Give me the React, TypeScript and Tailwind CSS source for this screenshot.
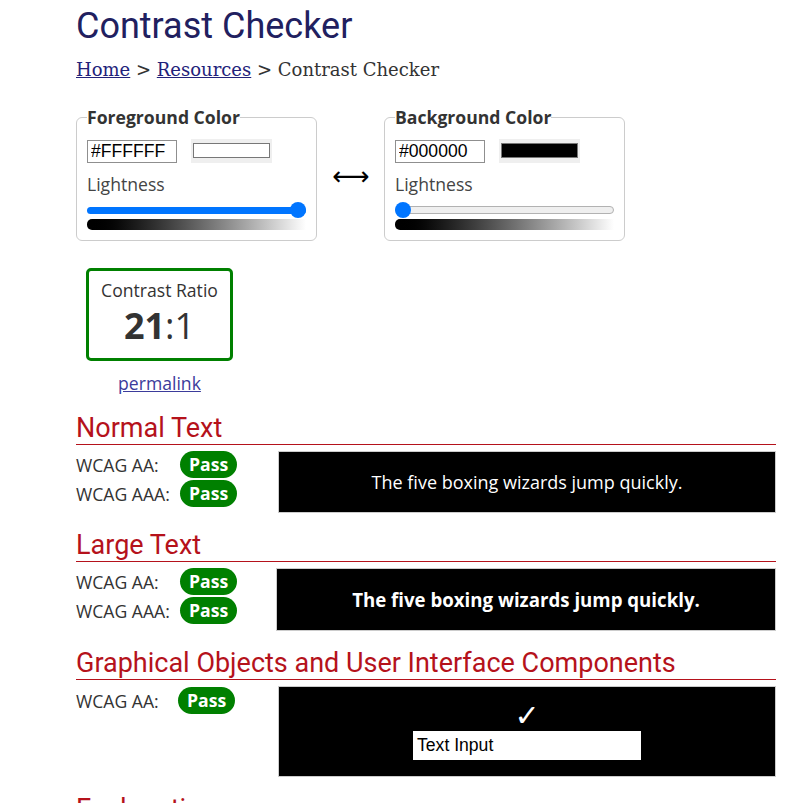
import React from "react";

function Pass() {
  return (
    <span className="inline-flex h-[27px] items-center rounded-full bg-[#008000] px-[9px] font-bold leading-none text-white">
      Pass
    </span>
  );
}

function Heading({ children }: { children: React.ReactNode }) {
  return (
    <h2 className="border-b border-[#b5121b] font-['Roboto'] text-[27px] leading-[32px] font-normal text-[#b5121b]">
      {children}
    </h2>
  );
}

function ResultRow({ label, labelW = "w-[104px]" }: { label: string; labelW?: string }) {
  return (
    <div className="flex h-[27px] items-center">
      <span className={`${labelW} leading-[24px]`}>{label}</span>
      <Pass />
    </div>
  );
}

interface PickerProps {
  legend: string;
  hex: string;
  swatch: string;
  dark: boolean;
}

function Picker({ legend, hex, swatch, dark }: PickerProps) {
  return (
    <fieldset className="w-[241px] rounded-[6px] border border-[#cccccc] px-[10px] pb-[10px]">
      <legend className="px-0 font-bold leading-[24px] text-[#333]">{legend}</legend>
      <div className="mt-[10px] flex h-[24px] items-center gap-[14px]">
        <input
          readOnly
          value={hex}
          className="h-[23px] w-[90px] border border-[#8f8f8f] px-[3px] font-['Liberation_Sans'] text-[17.6px] text-black"
        />
        <div className="h-[24px] w-[81px] bg-[#efefef] px-[2px] pt-[4px] pb-[5px]">
          <div className={`h-full border border-[#777] ${swatch}`} />
        </div>
      </div>
      <div className="mt-[9px] leading-[24px] text-[#444]">Lightness</div>
      <div className="relative mt-[6px] flex h-[16px] items-center">
        {dark ? (
          <div className="h-[8px] w-full rounded-full border border-[#b2b2b2] bg-[#efefef]" />
        ) : (
          <div className="h-[7px] w-full rounded-full bg-[#0075ff]" />
        )}
        <div
          className={`absolute top-0 h-[16px] w-[16px] rounded-full bg-[#0075ff] ${dark ? "left-0" : "right-0"}`}
        />
      </div>
      <div className="mt-[1px] h-[11px] rounded-l-[5px] bg-linear-to-r from-black to-white" />
    </fieldset>
  );
}

export default function App() {
  return (
    <div className="h-[803px] overflow-hidden bg-white pt-[5px] pl-[76px] font-['Open_Sans'] text-[17.6px] text-[#333]">
      <div className="w-[700px]">
        <h1 className="font-['Roboto'] text-[36px] leading-[42px] font-normal text-[#21205f]">Contrast Checker</h1>
        <nav className="mt-[11px] font-['DejaVu_Serif'] text-[18px] leading-[24px] text-[#333]">
          <a href="#" className="text-[#22227a] underline">Home</a>
          {" > "}
          <a href="#" className="text-[#22227a] underline">Resources</a>
          {" > Contrast Checker"}
        </nav>

        <div className="mt-[23px] flex items-center">
          <Picker legend="Foreground Color" hex="#FFFFFF" swatch="bg-white" dark={false} />
          <div className="w-[68px] pt-[6px] text-center font-['DejaVu_Sans'] text-[26px] leading-[30px] text-black">⟷</div>
          <div className="-ml-[1px]">
            <Picker legend="Background Color" hex="#000000" swatch="bg-black" dark={true} />
          </div>
        </div>

        <div className="mt-[27px] ml-[10px] h-[93px] w-[147px] rounded-[5px] border-[3px] border-[#008000] pt-[7px] text-center">
          <div className="leading-[24px]">Contrast Ratio</div>
          <div className="mt-[4px] text-[36px] leading-[40px]">
            <span className="font-bold">21</span>:1
          </div>
        </div>
        <div className="mt-[10px] ml-[10px] w-[147px] text-center leading-[24px]">
          <a href="#" className="text-[#3b3b9b] underline">permalink</a>
        </div>

        <section className="mt-[17px]">
          <Heading>Normal Text</Heading>
          <div className="mt-[6px] flex">
            <div className="flex w-[202px] flex-col gap-[2px]">
              <ResultRow label="WCAG AA:" />
              <ResultRow label="WCAG AAA:" />
            </div>
            <div className="flex h-[62px] flex-1 items-center justify-center border border-[#cccccc] bg-black text-[18px] text-white">
              The five boxing wizards jump quickly.
            </div>
          </div>
        </section>

        <section className="mt-[16px]">
          <Heading>Large Text</Heading>
          <div className="mt-[6px] flex">
            <div className="flex w-[200px] flex-col gap-[2px]">
              <ResultRow label="WCAG AA:" />
              <ResultRow label="WCAG AAA:" />
            </div>
            <div className="flex h-[63px] flex-1 items-center justify-center border border-[#cccccc] bg-black text-[18.67px] font-bold text-white">
              The five boxing wizards jump quickly.
            </div>
          </div>
        </section>

        <section className="mt-[16px]">
          <Heading>Graphical Objects and User Interface Components</Heading>
          <div className="mt-[6px] flex">
            <div className="mt-[1px] w-[202px]">
              <ResultRow label="WCAG AA:" labelW="w-[102px]" />
            </div>
            <div className="flex h-[91px] flex-1 flex-col items-center justify-center border border-[#cccccc] bg-black">
              <div className="font-['DejaVu_Sans'] text-[30px] leading-[26px] text-white">✓</div>
              <div className="mt-[2px] h-[29px] w-[228px] bg-white pl-[4px] font-['Liberation_Sans'] text-[17.6px] leading-[29px] text-black">
                Text Input
              </div>
            </div>
          </div>
        </section>

        <section className="mt-[16px]">
          <Heading>Explanation</Heading>
        </section>
      </div>
    </div>
  );
}
